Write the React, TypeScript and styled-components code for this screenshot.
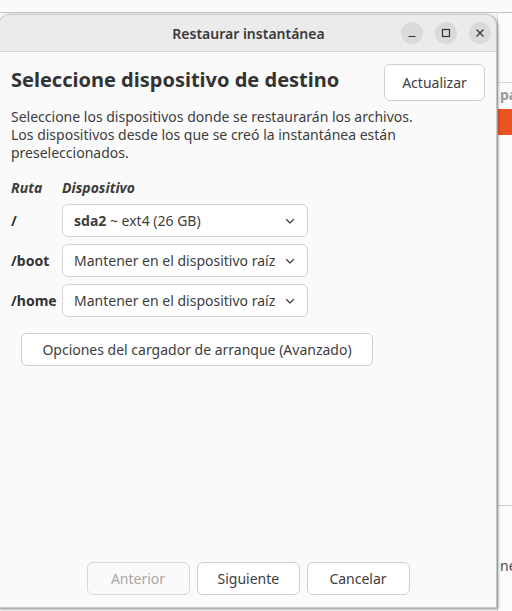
import styled, { createGlobalStyle } from 'styled-components'

const GlobalStyle = createGlobalStyle`
	html, body {
		margin: 0;
		padding: 0;
		width: 512px;
		height: 611px;
		overflow: hidden;
		background: #fafafa;
		font-family: 'Noto Sans', 'Open Sans', sans-serif;
		color: #3d3d3d;
	}
	* { box-sizing: border-box; }
`

const Desktop = styled.div`
	position: relative;
	width: 512px;
	height: 611px;
	overflow: hidden;
	display: flex;
	flex-direction: column;
`

const BackTop = styled.div`
	height: 13px;
	border-bottom: 1px solid #c4c4c4;
	background: #fafafa;
`

const BackMain = styled.div`
	flex: 1;
	display: flex;
	background: #f6f6f6;
`

const BackSpacer = styled.div`
	flex: 1;
`

const BackColumn = styled.div`
	width: 15px;
	display: flex;
	flex-direction: column;
	padding-top: 69px;
	overflow: hidden;
	background: #fcfcfc;
	border-left: 1px solid #dcdcdc;
`

const BackLabel = styled.div`
	font-size: 14px;
	font-weight: 700;
	color: #9a9a9a;
	white-space: nowrap;
	border-top: 1px solid #d6d6d6;
	padding: 2px 0 0 2px;
	height: 27px;
`

const BackAccent = styled.div`
	height: 26px;
	background: #e95420;
`

const BackFill = styled.div`
	height: 371px;
	border-bottom: 1px solid #cfcfcf;
`

const BackText = styled.div`
	font-size: 14px;
	color: #4a4a4a;
	white-space: nowrap;
	padding: 50px 0 0 2px;
`

const Window = styled.div`
	position: absolute;
	left: -2px;
	top: 14px;
	width: 499px;
	height: 594px;
	background: #fafafa;
	border-radius: 12px 12px 0 0;
	border: 1px solid #c8c8c8;
	box-shadow: 1px 1px 3px rgba(0, 0, 0, 0.45);
	display: flex;
	flex-direction: column;
	overflow: hidden;
`

const TitleBar = styled.div`
	position: relative;
	height: 37px;
	flex-shrink: 0;
	background: #ebebeb;
	border-bottom: 1px solid #d3d3d3;
	display: flex;
	align-items: center;
	justify-content: center;
`

const Title = styled.div`
	font-size: 14px;
	font-weight: 600;
	color: #3a3a3a;
	margin-left: 2px;
`

const Controls = styled.div`
	position: absolute;
	right: 5px;
	top: 7px;
	display: flex;
	gap: 12px;
`

const CtrlButton = styled.div`
	width: 22px;
	height: 22px;
	border-radius: 50%;
	background: #dadada;
	display: flex;
	align-items: center;
	justify-content: center;
	color: #333;
`

const Body = styled.div`
	flex: 1;
	display: flex;
	flex-direction: column;
	padding: 12px 11px 12px 12px;
`

const HeaderRow = styled.div`
	display: flex;
	justify-content: space-between;
	align-items: flex-start;
`

const Heading = styled.h1`
	margin: 2px 0 0;
	font-size: 20px;
	font-weight: 700;
	color: #333;
	letter-spacing: 0;
`

const Button = styled.button<{ $disabled?: boolean; $width?: number }>`
	font-family: inherit;
	font-size: 14px;
	height: 33px;
	width: ${p => (p.$width ? `${p.$width}px` : 'auto')};
	padding: 0 20px;
	border-radius: 6px;
	border: 1px solid #cfcfcf;
	color: ${p => (p.$disabled ? '#a8a8a8' : '#3d3d3d')};
	background: ${p => (p.$disabled ? '#fafafa' : '#ffffff')};
	border-color: ${p => (p.$disabled ? '#d8d8d8' : '#cfcfcf')};
`

const RefreshButton = styled(Button)`
	height: 37px;
	width: 101px;
	padding: 0;
`

const Description = styled.p`
	margin: 7px 0 0;
	font-size: 14px;
	line-height: 18px;
	color: #3d3d3d;
	width: 420px;
`

const Table = styled.div`
	margin-top: 16px;
	display: grid;
	grid-template-columns: 51px 246px;
	row-gap: 7px;
	align-items: center;
`

const ColHead = styled.div`
	font-size: 14px;
	font-weight: 700;
	font-style: italic;
	color: #3d3d3d;
`

const PathLabel = styled.div`
	font-size: 14px;
	font-weight: 700;
	color: #333;
`

const Combo = styled.div`
	height: 33px;
	border: 1px solid #d2d2d2;
	border-radius: 6px;
	background: #ffffff;
	display: flex;
	align-items: center;
	padding: 0 11px 0 11px;
	gap: 6px;
	font-size: 14px;
	color: #3d3d3d;
`

const ComboText = styled.span`
	flex: 1;
	white-space: nowrap;
	overflow: hidden;
`

const Strong = styled.b`
	font-weight: 700;
`

const AdvancedRow = styled.div`
	margin-top: 16px;
	padding-left: 10px;
`

const AdvancedButton = styled(Button)`
	width: 352px;
	padding: 0;
`

const Footer = styled.div`
	margin-top: auto;
	display: flex;
	justify-content: center;
	gap: 7px;
`

function Chevron() {
	return (
		<svg width="12" height="12" viewBox="0 0 12 12" fill="none">
			<path d="M2.5 4.5 L6 8 L9.5 4.5" stroke="#3d3d3d" strokeWidth="1.2" strokeLinecap="round" strokeLinejoin="round" />
		</svg>
	)
}

export default function App() {
	const rows = [
		{ path: '/', device: <><Strong>sda2</Strong> ~ ext4 (26 GB)</> },
		{ path: '/boot', device: 'Mantener en el dispositivo raíz' },
		{ path: '/home', device: 'Mantener en el dispositivo raíz' },
	]

	return (
		<Desktop>
			<GlobalStyle />
			<BackTop />
			<BackMain>
				<BackSpacer />
				<BackColumn>
					<BackLabel>pa</BackLabel>
					<BackAccent />
					<BackFill />
					<BackText>ne</BackText>
				</BackColumn>
			</BackMain>

			<Window>
				<TitleBar>
					<Title>Restaurar instantánea</Title>
					<Controls>
						<CtrlButton>
							<svg width="10" height="10" viewBox="0 0 10 10">
								<path d="M1.5 8.5 H8.5" stroke="#333" strokeWidth="1.2" />
							</svg>
						</CtrlButton>
						<CtrlButton>
							<svg width="10" height="10" viewBox="0 0 10 10">
								<rect x="1.5" y="1.5" width="7" height="7" fill="none" stroke="#333" strokeWidth="1.2" />
							</svg>
						</CtrlButton>
						<CtrlButton>
							<svg width="10" height="10" viewBox="0 0 10 10">
								<path d="M1.5 1.5 L8.5 8.5 M8.5 1.5 L1.5 8.5" stroke="#333" strokeWidth="1.2" />
							</svg>
						</CtrlButton>
					</Controls>
				</TitleBar>

				<Body>
					<HeaderRow>
						<Heading>Seleccione dispositivo de destino</Heading>
						<RefreshButton>Actualizar</RefreshButton>
					</HeaderRow>

					<Description>
						Seleccione los dispositivos donde se restaurarán los archivos.
						<br />
						Los dispositivos desde los que se creó la instantánea están preseleccionados.
					</Description>

					<Table>
						<ColHead>Ruta</ColHead>
						<ColHead>Dispositivo</ColHead>
						{rows.map(row => (
							<>
								<PathLabel key={row.path + '-l'}>{row.path}</PathLabel>
								<Combo key={row.path + '-c'}>
									<ComboText>{row.device}</ComboText>
									<Chevron />
								</Combo>
							</>
						))}
					</Table>

					<AdvancedRow>
						<AdvancedButton>Opciones del cargador de arranque (Avanzado)</AdvancedButton>
					</AdvancedRow>

					<Footer>
						<Button $disabled $width={103}>Anterior</Button>
						<Button $width={103}>Siguiente</Button>
						<Button $width={103}>Cancelar</Button>
					</Footer>
				</Body>
			</Window>
		</Desktop>
	)
}
